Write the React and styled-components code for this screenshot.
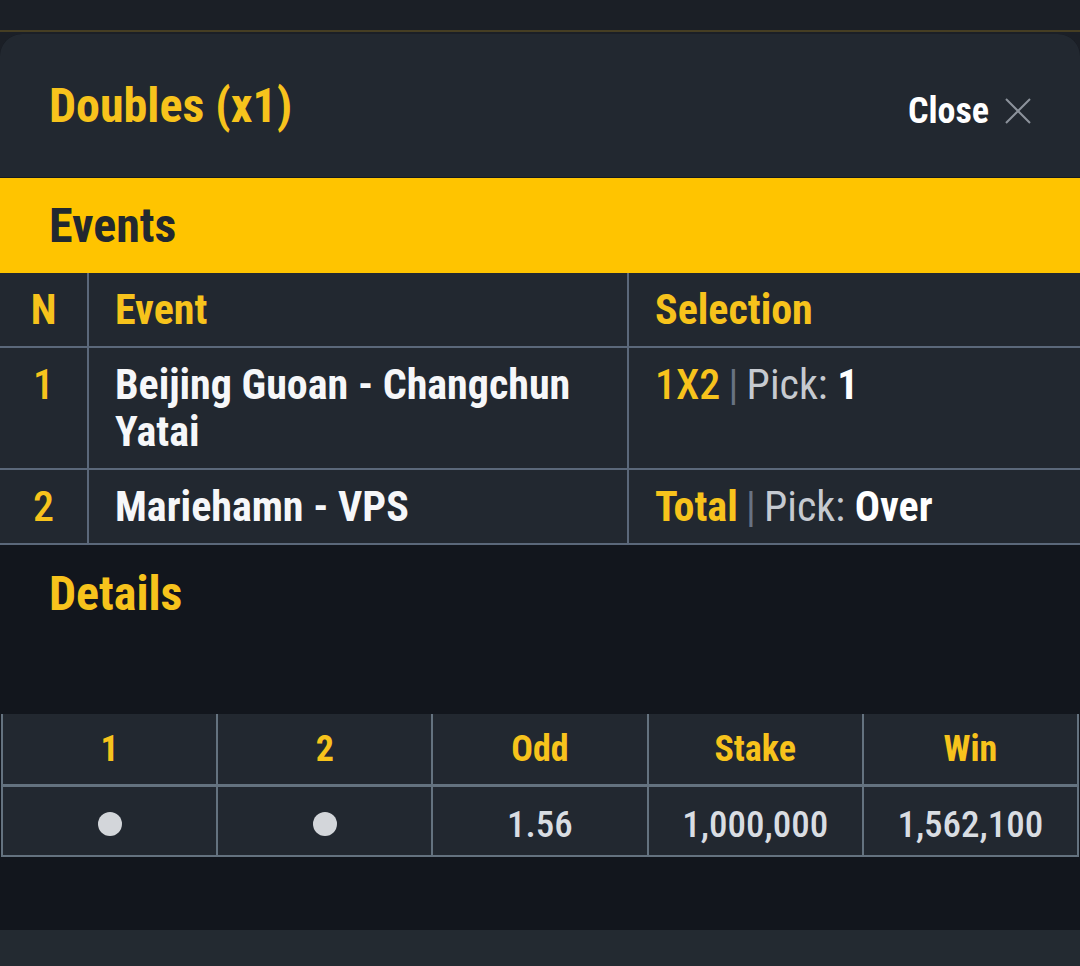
import React from 'react'
import styled, { createGlobalStyle } from 'styled-components'

const COLORS = {
  page: '#1b1f26',
  panel: '#222830',
  deep: '#12161d',
  foot: '#232a31',
  yellow: '#f7c31c',
  bar: '#ffc400',
  line: '#5b687a',
  lineLight: '#64727f',
  white: '#f6f7f9',
  grey: '#d9dde2',
  muted: '#c6cad0',
}

const GlobalStyle = createGlobalStyle`
  html, body {
    margin: 0;
    padding: 0;
    background: ${COLORS.page};
  }
  body {
    font-family: Roboto, 'Liberation Sans', sans-serif;
    font-stretch: 75%;
  }
`

const Page = styled.div`
  display: flex;
  flex-direction: column;
  width: 1080px;
  height: 966px;
  overflow: hidden;
  background: ${COLORS.page};
`

const Backdrop = styled.div`
  height: 30px;
  flex: none;
  border-bottom: 2px solid #463e23;
`

const Panel = styled.div`
  flex: 1;
  display: flex;
  flex-direction: column;
  margin-top: 2px;
  border-radius: 22px 22px 0 0;
  background: ${COLORS.deep};
  overflow: hidden;
`

const Header = styled.div`
  display: flex;
  align-items: center;
  justify-content: space-between;
  height: 143px;
  padding: 0 49px 0 49px;
  background: ${COLORS.panel};
  border-bottom: 1px solid #151a20;
`

const Title = styled.h1`
  margin: 0;
  color: ${COLORS.yellow};
  font-size: 48px;
  font-weight: 700;
  line-height: 1;
`

const CloseButton = styled.button`
  display: flex;
  align-items: center;
  gap: 16px;
  margin-top: 10px;
  padding: 0;
  border: none;
  background: none;
  color: #ffffff;
  font-family: inherit;
  font-stretch: inherit;
  font-size: 36px;
  font-weight: 700;
  cursor: pointer;
`

const SectionBar = styled.div`
  display: flex;
  align-items: center;
  height: ${({ $height }) => $height}px;
  padding: 0 49px;
  background: ${({ $filled }) => ($filled ? COLORS.bar : 'transparent')};
  color: ${({ $filled }) => ($filled ? COLORS.panel : COLORS.yellow)};
  font-size: 48px;
  font-weight: 700;
  flex: none;
`

const EventsTable = styled.table`
  width: 100%;
  border-collapse: collapse;
  background: ${COLORS.panel};
  table-layout: fixed;
`

const Th = styled.th`
  height: 47px;
  padding: 13px 0 13px ${({ $center }) => ($center ? 0 : 26)}px;
  border: 2px solid ${COLORS.line};
  border-top: none;
  color: ${COLORS.yellow};
  font-size: 42px;
  font-weight: 700;
  line-height: 47px;
  text-align: ${({ $center }) => ($center ? 'center' : 'left')};
  vertical-align: top;

  &:first-child {
    border-left: none;
  }
  &:last-child {
    border-right: none;
  }
`

const Td = styled.td`
  padding: 13px 10px 13px ${({ $center }) => ($center ? 0 : 26)}px;
  border: 2px solid ${COLORS.line};
  color: ${({ $accent }) => ($accent ? COLORS.yellow : COLORS.white)};
  font-size: 42px;
  font-weight: ${({ $accent }) => ($accent ? 500 : 700)};
  line-height: 47px;
  text-align: ${({ $center }) => ($center ? 'center' : 'left')};
  vertical-align: top;

  &:first-child {
    padding-right: 0;
    border-left: none;
  }
  &:last-child {
    border-right: none;
  }
`

const Market = styled.span`
  color: ${COLORS.yellow};
  font-weight: ${({ $bold }) => ($bold ? 700 : 500)};
`

const Divider = styled.span`
  margin: 0 8px;
  color: #687282;
  font-weight: 400;
`

const PickLabel = styled.span`
  color: ${COLORS.muted};
  font-weight: 400;
`

const PickValue = styled.span`
  color: #ffffff;
  font-weight: 700;
`

const Details = styled.div`
  display: flex;
  flex-direction: column;
`

const DetailsTable = styled.table`
  width: 1078px;
  margin: 73px 0 0 1px;
  border-collapse: collapse;
  table-layout: fixed;
  background: ${COLORS.panel};
`

const DTh = styled.th`
  height: 70px;
  padding: 0;
  border: 2px solid ${COLORS.lineLight};
  border-top: none;
  color: ${COLORS.yellow};
  font-size: 36px;
  font-weight: 700;
  text-align: center;
`

const DTd = styled.td`
  height: 62px;
  padding: 6px 0 0;
  border: 2px solid ${COLORS.lineLight};
  border-top-width: 3px;
  color: ${COLORS.grey};
  font-size: 37px;
  font-weight: 500;
  text-align: center;
`

const Dot = styled.span`
  display: inline-block;
  width: 24px;
  height: 24px;
  margin-top: -6px;
  border-radius: 50%;
  background: #d3d6da;
  vertical-align: middle;
`

const Spacer = styled.div`
  flex: 1;
`

const Footer = styled.div`
  height: 36px;
  flex: none;
  background: ${COLORS.foot};
`

const CloseIcon = () => (
  <svg width="26" height="26" viewBox="0 0 26 26" fill="none">
    <path d="M1 1 25 25M25 1 1 25" stroke="#8c929b" strokeWidth="2" />
  </svg>
)

const events = [
  { n: 1, name: 'Beijing Guoan - Changchun Yatai', market: '1X2', pick: '1' },
  { n: 2, name: 'Mariehamn - VPS', market: 'Total', pick: 'Over', bold: true },
]

export default function App() {
  return (
    <Page>
      <GlobalStyle />
      <Backdrop />
      <Panel>
        <Header>
          <Title>Doubles (x1)</Title>
          <CloseButton>
            Close
            <CloseIcon />
          </CloseButton>
        </Header>

        <SectionBar $filled $height={95}>Events</SectionBar>

        <EventsTable>
          <colgroup>
            <col style={{ width: 88 }} />
            <col style={{ width: 540 }} />
            <col />
          </colgroup>
          <thead>
            <tr>
              <Th $center>N</Th>
              <Th>Event</Th>
              <Th>Selection</Th>
            </tr>
          </thead>
          <tbody>
            {events.map((e) => (
              <tr key={e.n}>
                <Td $center $accent>
                  {e.n}
                </Td>
                <Td>{e.name}</Td>
                <Td>
                  <Market $bold={e.bold}>{e.market}</Market>
                  <Divider>|</Divider>
                  <PickLabel>Pick: </PickLabel>
                  <PickValue>{e.pick}</PickValue>
                </Td>
              </tr>
            ))}
          </tbody>
        </EventsTable>

        <Details>
          <SectionBar $height={96}>Details</SectionBar>
          <DetailsTable>
            <thead>
              <tr>
                <DTh>1</DTh>
                <DTh>2</DTh>
                <DTh>Odd</DTh>
                <DTh>Stake</DTh>
                <DTh>Win</DTh>
              </tr>
            </thead>
            <tbody>
              <tr>
                <DTd>
                  <Dot />
                </DTd>
                <DTd>
                  <Dot />
                </DTd>
                <DTd>1.56</DTd>
                <DTd>1,000,000</DTd>
                <DTd>1,562,100</DTd>
              </tr>
            </tbody>
          </DetailsTable>
        </Details>
        <Spacer />
        <Footer />
      </Panel>
    </Page>
  )
}
